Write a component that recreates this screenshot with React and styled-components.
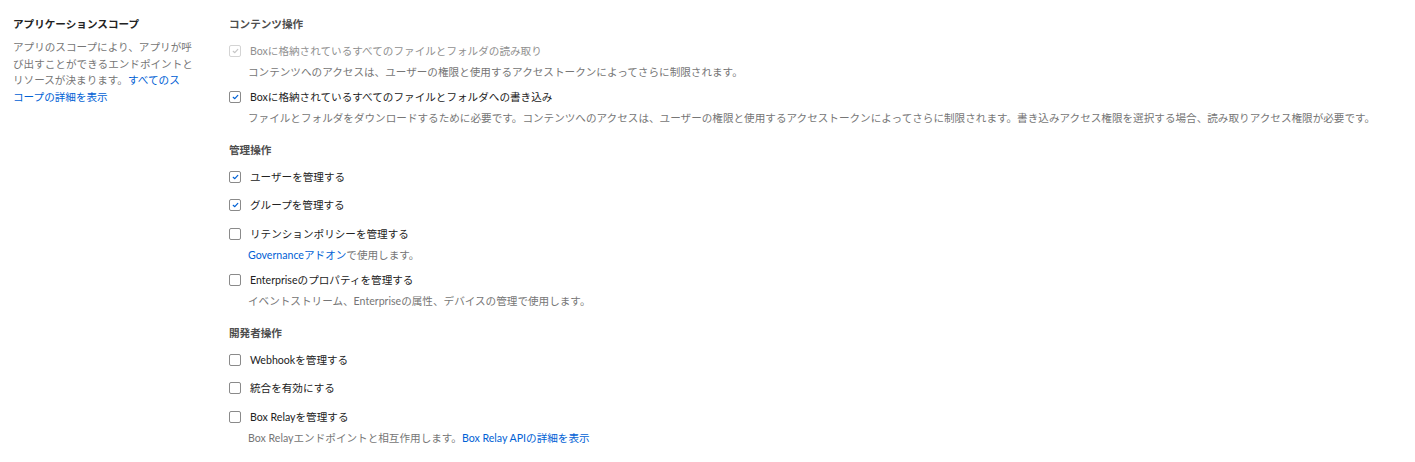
import React from 'react';
import styled, { createGlobalStyle } from 'styled-components';

const GlobalStyle = createGlobalStyle`
  body {
    margin: 0;
    background: #fff;
    font-family: Lato, "Noto Sans CJK JP", sans-serif;
    font-size: 10.6px;
    color: #222;
  }
`;

const Page = styled.div`
  display: flex;
  padding: 16px 0 0 13px;
`;

const Aside = styled.div`
  width: 186px;
  flex: none;
  margin-right: 30px;
`;

const AsideTitle = styled.h3`
  margin: 0 0 6px;
  font-size: 10.6px;
  font-weight: 700;
  line-height: 17px;
  color: #222;
`;

const AsideText = styled.p`
  margin: 0;
  line-height: 16.5px;
  color: #767676;
  line-break: strict;
`;

const Link = styled.a`
  color: #0061d5;
  text-decoration: none;
`;

const Main = styled.div`
  flex: 1;
  display: flex;
  flex-direction: column;
  gap: 7.5px;
`;

const Section = styled.section`
  display: flex;
  flex-direction: column;
`;

const SectionTitle = styled.h4`
  margin: 0 0 10.5px;
  font-size: 10.6px;
  font-weight: 700;
  line-height: 16px;
  color: #4e4e4e;
`;

const Row = styled.div`
  margin-bottom: ${(p) => (p.$hasDesc ? '9px' : '12.5px')};
`;

const Label = styled.label`
  display: flex;
  align-items: center;
  line-height: 16px;
  color: ${(p) => (p.$disabled ? '#909090' : '#222')};
`;

const Box = styled.span`
  width: 10px;
  height: 10px;
  flex: none;
  margin-right: 9px;
  border: 1px solid ${(p) => (p.$disabled ? '#d4d4d4' : '#8a8a8a')};
  border-radius: 2px;
  background: #fff;
  display: flex;
  align-items: center;
  justify-content: center;
  box-sizing: content-box;
`;

const Desc = styled.div`
  margin: 5px 0 0 19px;
  line-height: 16px;
  color: #767676;
`;

const Check = ({ checked, disabled }) => (
  <Box $disabled={disabled}>
    {checked && (
      <svg width="7" height="6" viewBox="0 0 7 6">
        <path
          d="M1.2 3.3 L2.8 4.7 L5.8 1.4"
          fill="none"
          stroke={disabled ? '#c6c6c6' : '#0061d5'}
          strokeWidth="1.2"
          strokeLinecap="round"
          strokeLinejoin="round"
        />
      </svg>
    )}
  </Box>
);

const Scope = ({ label, checked, disabled, children }) => (
  <Row $hasDesc={!!children}>
    <Label $disabled={disabled}>
      <Check checked={checked} disabled={disabled} />
      {label}
    </Label>
    {children && <Desc>{children}</Desc>}
  </Row>
);

export default function App() {
  return (
    <>
      <GlobalStyle />
      <Page>
        <Aside>
          <AsideTitle>アプリケーションスコープ</AsideTitle>
          <AsideText>
            アプリのスコープにより、アプリが呼び出すことができるエンドポイントとリソースが決まります。
            <Link href="#">すべてのス{'コ\u2060ープ'}の詳細を表示</Link>
          </AsideText>
        </Aside>
        <Main>
          <Section>
            <SectionTitle>コンテンツ操作</SectionTitle>
            <Scope label="Boxに格納されているすべてのファイルとフォルダの読み取り" checked disabled>
              コンテンツへのアクセスは、ユーザーの権限と使用するアクセストークンによってさらに制限されます。
            </Scope>
            <Scope label="Boxに格納されているすべてのファイルとフォルダへの書き込み" checked>
              ファイルとフォルダをダウンロードするために必要です。コンテンツへのアクセスは、ユーザーの権限と使用するアクセストークンによってさらに制限されます。書き込みアクセス権限を選択する場合、読み取りアクセス権限が必要です。
            </Scope>
          </Section>
          <Section>
            <SectionTitle>管理操作</SectionTitle>
            <Scope label="ユーザーを管理する" checked />
            <Scope label="グループを管理する" checked />
            <Scope label="リテンションポリシーを管理する">
              <Link href="#">Governanceアドオン</Link>で使用します。
            </Scope>
            <Scope label="Enterpriseのプロパティを管理する">
              イベントストリーム、Enterpriseの属性、デバイスの管理で使用します。
            </Scope>
          </Section>
          <Section>
            <SectionTitle>開発者操作</SectionTitle>
            <Scope label="Webhookを管理する" />
            <Scope label="統合を有効にする" />
            <Scope label="Box Relayを管理する">
              Box Relayエンドポイントと相互作用します。
              <Link href="#">Box Relay APIの詳細を表示</Link>
            </Scope>
          </Section>
        </Main>
      </Page>
    </>
  );
}
